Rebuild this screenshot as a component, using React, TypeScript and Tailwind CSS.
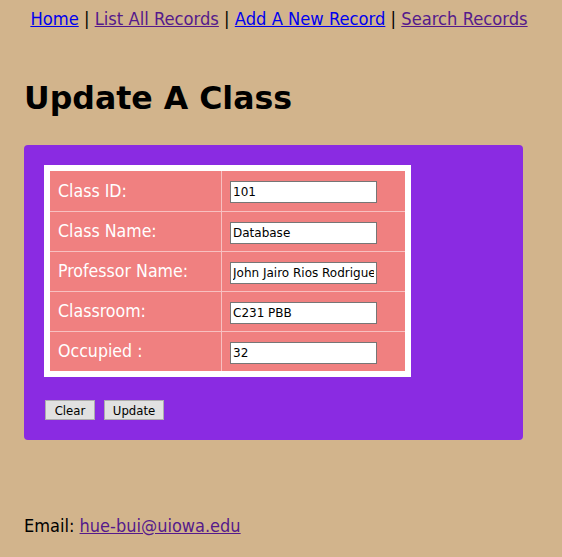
export default function App() {
  const rows = [
    { label: "Class ID:", value: "101" },
    { label: "Class Name:", value: "Database" },
    { label: "Professor Name:", value: "John Jairo Rios Rodriguez" },
    { label: "Classroom:", value: "C231 PBB" },
    { label: "Occupied :", value: "32" },
  ];

  return (
    <div className="min-h-screen bg-[#d2b48c] px-[24px] pt-[8px] pb-[20px] text-black [font-family:'DejaVu_Sans_Condensed','DejaVu_Sans',sans-serif]">
      {/* nav */}
      <div className="pr-[4px] text-center text-[18.2px] leading-[22px]">
        <a href="#" className="text-[#0000ee] underline">Home</a> |{" "}
        <a href="#" className="text-[#551a8b] underline">List All Records</a> |{" "}
        <a href="#" className="text-[#0000ee] underline">Add A New Record</a> |{" "}
        <a href="#" className="text-[#551a8b] underline">Search Records</a>
      </div>

      <h1 className="mt-[48px] text-[31.6px] font-bold leading-[40px] [font-family:'DejaVu_Sans',sans-serif]">
        Update A Class
      </h1>

      <div className="mt-[27px] w-[499px] rounded-[4px] bg-[#8a2be2] px-[20px] pt-[20px] pb-[20px]">
        <table className="border-separate border-spacing-0 border-[6px] border-white bg-white">
          <tbody>
            {rows.map((r, i) => (
              <tr key={r.label}>
                <td
                  className={`h-[40px] w-[171px] bg-[#f08080] pl-[8px] text-[17.6px] text-white ${
                    i > 0 ? "border-t border-[#f8c0c0]" : ""
                  }`}
                >
                  {r.label}
                </td>
                <td
                  className={`h-[40px] w-[184px] border-l border-[#f8c0c0] bg-[#f08080] pl-[8px] ${
                    i > 0 ? "border-t" : ""
                  }`}
                >
                  <input
                    type="text"
                    defaultValue={r.value}
                    className="h-[22px] w-[147px] border border-[#767676] bg-white px-[2px] text-[12px] text-black outline-none [font-family:'DejaVu_Sans',sans-serif]"
                  />
                </td>
              </tr>
            ))}
          </tbody>
        </table>

        <div className="mt-[23px] flex gap-[9px] pl-[1px]">
          <button className="h-[20px] w-[50px] border border-[#adadad] bg-[#e1e1e1] text-[13px] leading-none">
            Clear
          </button>
          <button className="h-[20px] w-[60px] border border-[#adadad] bg-[#e1e1e1] text-[13px] leading-none">
            Update
          </button>
        </div>
      </div>

      <div className="mt-[72px] text-[18px]">
        Email:{" "}
        <a href="#" className="text-[#551a8b] underline">hue-bui@uiowa.edu</a>
      </div>
    </div>
  );
}
